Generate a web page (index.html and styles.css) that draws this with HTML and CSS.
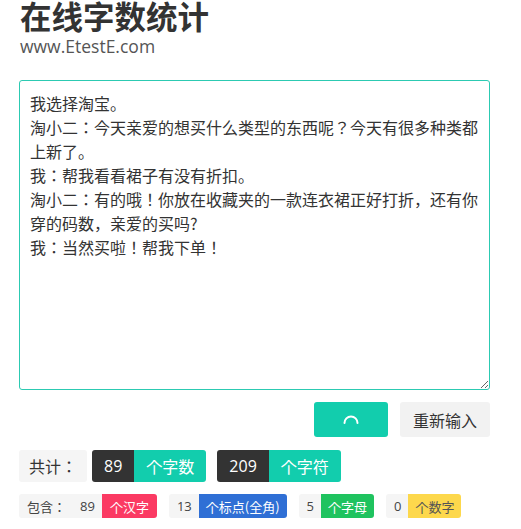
FILE: index.html
```html
<!DOCTYPE html>
<html lang="zh-CN">
<head>
    <meta charset="UTF-8">
    <meta name="viewport" content="width=device-width, initial-scale=1.0">
    <title>在线字数统计</title>
    <link rel="stylesheet" href="styles.css">
</head>
<body>
    <div class="pagina">
        <h1 class="titulo">在线字数统计</h1>
        <div class="site">www.EtestE.com</div>

        <textarea class="texto" id="texto">我选择淘宝。
淘小二：今天亲爱的想买什么类型的东西呢？今天有很多种类都上新了。
我：帮我看看裙子有没有折扣。
淘小二：有的哦！你放在收藏夹的一款连衣裙正好打折，还有你穿的码数，亲爱的买吗?
我：当然买啦！帮我下单！</textarea>

        <div class="acoes">
            <button class="btn-contar">
                <svg width="20" height="20" viewBox="0 0 20 20"><path d="M3.5 13 A6.5 6.5 0 0 1 16.5 13" fill="none" stroke="#fff" stroke-width="2" stroke-linecap="round"/></svg>
            </button>
            <button class="btn-limpar">重新输入</button>
        </div>

        <div class="total">
            <span class="rotulo">共计：</span>
            <span class="grupo primeiro"><span class="num">89</span><span class="tag verde">个字数</span></span>
            <span class="grupo"><span class="num">209</span><span class="tag verde">个字符</span></span>
        </div>

        <div class="detalhe">
            <span class="grupo"><span class="mini-rotulo">包含：</span><span class="mini-num">89</span><span class="mini-tag rosa">个汉字</span></span>
            <span class="grupo"><span class="mini-num">13</span><span class="mini-tag azul">个标点(全角)</span></span>
            <span class="grupo"><span class="mini-num">5</span><span class="mini-tag folha">个字母</span></span>
            <span class="grupo"><span class="mini-num">0</span><span class="mini-tag amarelo">个数字</span></span>
        </div>
    </div>
</body>
</html>
```

FILE: styles.css
```css
*{
    margin: 0;
    padding: 0;
    box-sizing: border-box;
}
body{
    background-color: #fff;
    font-family: "Open Sans", "Noto Sans CJK JP", sans-serif;
    font-feature-settings: "locl" 0;
    color: #333;
}
.pagina{
    width: 471px;
    margin-left: 19px;
}
.titulo{
    font-family: "Noto Sans CJK SC", sans-serif;
    font-size: 31.5px;
    font-weight: bold;
    line-height: 1;
    margin-left: 1px;
    color: #333;
}
.site{
    font-size: 17.5px;
    line-height: 22px;
    color: #555;
    margin-left: 1px;
    margin-top: 3.5px;
}
.texto{
    display: block;
    width: 471px;
    height: 310px;
    margin-top: 23px;
    padding: 10px;
    border: 1px solid #2ccab2;
    border-radius: 3px;
    font-family: "Noto Sans CJK JP", sans-serif;
    font-feature-settings: "locl" 0;
    font-size: 16px;
    line-height: 24px;
    color: #333;
    resize: vertical;
    outline: none;
}
.acoes{
    display: flex;
    justify-content: flex-end;
    gap: 12px;
    margin-top: 12px;
}
.acoes button{
    height: 35px;
    border: none;
    border-radius: 3px;
    font-family: "Noto Sans CJK JP", sans-serif;
    font-size: 16px;
    cursor: pointer;
}
.btn-contar{
    width: 74px;
    background-color: #12cdad;
    display: flex;
    justify-content: center;
    align-items: center;
}
.btn-limpar{
    width: 90px;
    background-color: #f2f2f2;
    color: #333;
}
.total{
    display: flex;
    align-items: center;
    margin-top: 13px;
    height: 32px;
}
.total .grupo{
    display: flex;
    height: 32px;
    border-radius: 3px;
    overflow: hidden;
    margin-left: 11px;
}
.total .primeiro{margin-left: 5px;}
.rotulo{
    display: flex;
    align-items: center;
    height: 32px;
    padding: 0 10px;
    background-color: #f5f5f5;
    border-radius: 3px;
    font-size: 16px;
    white-space: nowrap;
}
.num{
    display: flex;
    align-items: center;
    justify-content: center;
    padding: 0 12px;
    background-color: #333;
    color: #fff;
    font-size: 16px;
}
.tag{
    display: flex;
    align-items: center;
    padding: 0 12px;
    color: #fff;
    font-family: "Noto Sans CJK JP", sans-serif;
    font-size: 16px;
}
.verde{background-color: #12cdad;}
.detalhe{
    display: flex;
    gap: 12px;
    margin-top: 12px;
}
.detalhe .grupo{
    display: flex;
    height: 24px;
    border-radius: 3px;
    overflow: hidden;
    font-size: 13px;
    white-space: nowrap;
}
.mini-rotulo, .mini-num{
    display: flex;
    align-items: center;
    background-color: #f5f5f5;
    color: #444;
}
.mini-rotulo{padding: 0 0 0 8px;}
.mini-num{padding: 0 7px 0 8px;}
.mini-rotulo + .mini-num{padding-left: 14px;}
.mini-tag{
    display: flex;
    align-items: center;
    padding: 0 7px;
    color: #fff;
    font-family: "Noto Sans CJK JP", sans-serif;
}
.rosa{background-color: #fb3a63; padding: 0 8px;}
.azul{background-color: #2f6fd5;}
.folha{background-color: #1fc35f;}
.amarelo{background-color: #fdd84c; color: #555;}
```
